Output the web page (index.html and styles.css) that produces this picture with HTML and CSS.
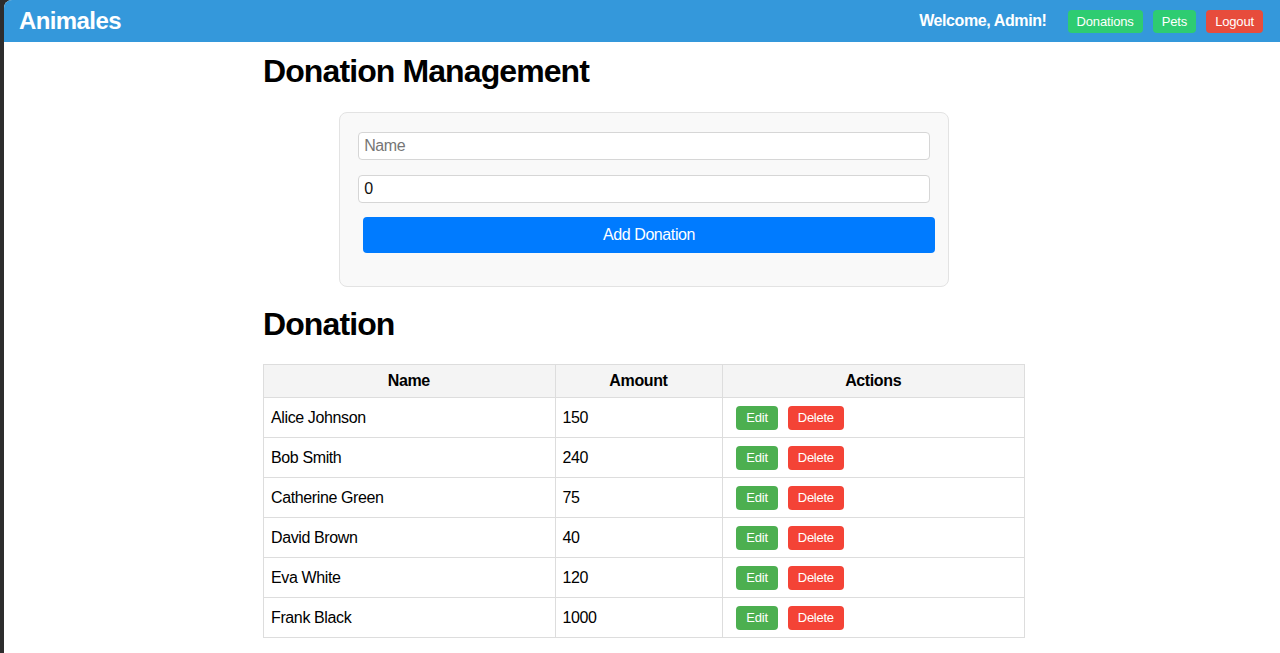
FILE: index.html
```html
<!DOCTYPE html>
<html lang="en">
<head>
<meta charset="utf-8">
<title>Animales - Donation Management</title>
<link rel="stylesheet" href="styles.css">
</head>
<body>
<div class="page">
  <header class="topbar">
    <div class="brand">Animales</div>
    <nav class="nav">
      <span class="welcome">Welcome, Admin!</span>
      <a class="nav-btn nav-green" href="#">Donations</a>
      <a class="nav-btn nav-green" href="#">Pets</a>
      <a class="nav-btn nav-red" href="#">Logout</a>
    </nav>
  </header>
  <main class="container">
    <h1 class="title">Donation Management</h1>
    <form class="card">
      <input class="field field-first" type="text" placeholder="Name">
      <input class="field field-second" type="number" value="0">
      <button class="add-btn" type="button">Add Donation</button>
    </form>
    <h1 class="title title-list">Donation</h1>
    <table class="table">
      <colgroup>
        <col class="col-name">
        <col class="col-amount">
        <col class="col-actions">
      </colgroup>
      <thead>
        <tr><th>Name</th><th>Amount</th><th>Actions</th></tr>
      </thead>
      <tbody>
        <tr><td>Alice Johnson</td><td>150</td><td><div class="actions"><button class="btn btn-edit">Edit</button><button class="btn btn-delete">Delete</button></div></td></tr>
        <tr><td>Bob Smith</td><td>240</td><td><div class="actions"><button class="btn btn-edit">Edit</button><button class="btn btn-delete">Delete</button></div></td></tr>
        <tr><td>Catherine Green</td><td>75</td><td><div class="actions"><button class="btn btn-edit">Edit</button><button class="btn btn-delete">Delete</button></div></td></tr>
        <tr><td>David Brown</td><td>40</td><td><div class="actions"><button class="btn btn-edit">Edit</button><button class="btn btn-delete">Delete</button></div></td></tr>
        <tr><td>Eva White</td><td>120</td><td><div class="actions"><button class="btn btn-edit">Edit</button><button class="btn btn-delete">Delete</button></div></td></tr>
        <tr><td>Frank Black</td><td>1000</td><td><div class="actions"><button class="btn btn-edit">Edit</button><button class="btn btn-delete">Delete</button></div></td></tr>
      </tbody>
    </table>
  </main>
</div>
</body>
</html>
```

FILE: styles.css
```css
* { box-sizing: border-box; }

html, body {
  margin: 0;
  padding: 0;
  height: 100%;
}

body {
  background: #2d2d2d;
  font-family: "Liberation Sans", Arial, sans-serif;
  color: #000;
  overflow: hidden;
}

.page {
  margin-left: 4px;
  min-height: 100%;
  background: #fff;
  border-top-left-radius: 8px;
  overflow: hidden;
}

.topbar {
  height: 42px;
  background: #3498db;
  display: flex;
  align-items: center;
  justify-content: space-between;
  padding: 0 17px 0 15px;
}

.brand {
  color: #fff;
  font-size: 24px;
  letter-spacing: -0.6px;
  font-weight: bold;
  line-height: 28px;
}

.nav {
  display: flex;
  align-items: center;
}

.welcome {
  color: #fff;
  font-size: 16px;
  letter-spacing: -0.4px;
  font-weight: bold;
  margin-right: 11px;
  padding-bottom: 1px;
}

.nav-btn {
  display: inline-block;
  color: #fff;
  text-decoration: none;
  font-size: 13px;
  letter-spacing: -0.15px;
  line-height: 15px;
  padding: 4px 9px;
  border-radius: 4px;
  margin-left: 10px;
}

.nav-green { background: #2ecc71; }
.nav-red { background: #e74c3c; }

.container {
  width: 762px;
  margin-left: 259px;
}

.title {
  font-size: 32px;
  letter-spacing: -0.9px;
  line-height: 37px;
  font-weight: bold;
  margin: 11px 0 22px;
}

.title-list {
  margin: 19px 0 21px;
}

.card {
  width: 80%;
  margin: 0 auto;
  background: #f9f9f9;
  border: 1px solid #e3e3e3;
  border-radius: 8px;
  padding: 19px 18px 33px;
}

.field {
  display: block;
  width: 100%;
  height: 28px;
  border: 1px solid #d6d6d6;
  border-radius: 4px;
  background: #fff;
  padding: 0 5px;
  font-family: "Liberation Sans", Arial, sans-serif;
  font-size: 16px;
  letter-spacing: -0.4px;
  color: #111;
  margin: 0;
}

.field::placeholder { color: #767676; }

.field::-webkit-outer-spin-button,
.field::-webkit-inner-spin-button {
  -webkit-appearance: none;
  margin: 0;
}

.field-second { margin-top: 15px; }

.add-btn {
  display: block;
  width: 100%;
  height: 36px;
  margin: 14px 0 0 5px;
  background: #007bff;
  color: #fff;
  border: none;
  border-radius: 4px;
  font-family: "Liberation Sans", Arial, sans-serif;
  font-size: 16px;
  letter-spacing: -0.4px;
}

.table {
  width: 100%;
  border-collapse: collapse;
  font-size: 16px;
  letter-spacing: -0.38px;
}

.col-name { width: 292px; }
.col-amount { width: 168px; }
.col-actions { width: 302px; }

.table th,
.table td {
  border: 1px solid #ddd;
  padding: 8px 8px 8px 7px;
}

.table th {
  background: #f4f4f4;
  font-weight: bold;
  text-align: center;
  line-height: 16px;
}

.table td {
  text-align: left;
  line-height: 21px;
  height: 40px;
}

.actions {
  display: flex;
  align-items: center;
  height: 23px;
  margin-left: 1px;
}

.btn {
  height: 24px;
  padding: 0 10px;
  margin: 0 5px;
  border: none;
  border-radius: 4px;
  color: #fff;
  font-family: "Liberation Sans", Arial, sans-serif;
  font-size: 13px;
  letter-spacing: -0.25px;
  line-height: 24px;
}

.btn-edit { background: #4caf50; }
.btn-delete { background: #f44336; }
```
